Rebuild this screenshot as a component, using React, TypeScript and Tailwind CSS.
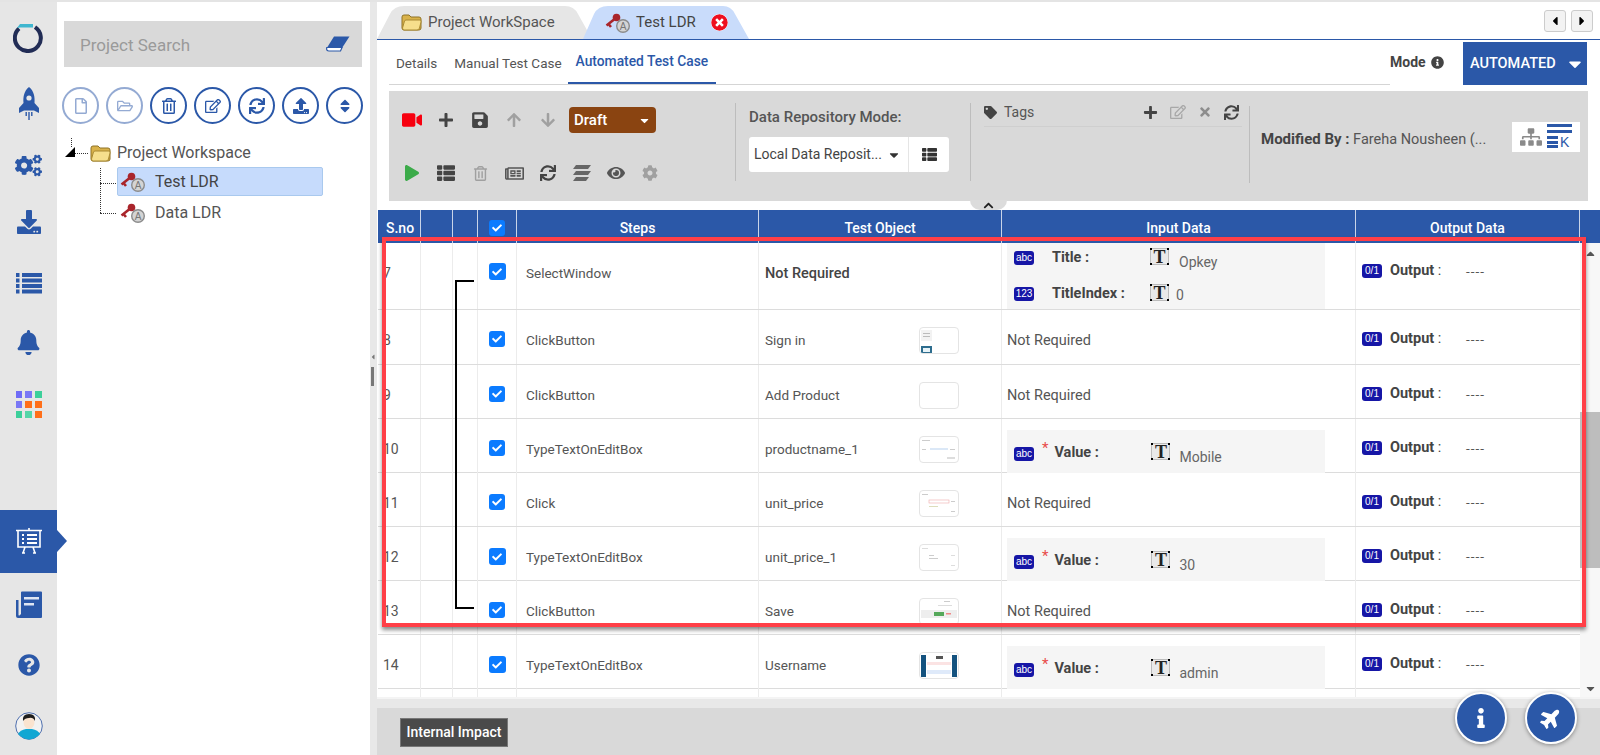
import React from "react";
import {
  FaArrowDown,
  FaArrowUp,
  FaBell,
  FaCaretDown,
  FaCaretLeft,
  FaCaretRight,
  FaCaretUp,
  FaCheck,
  FaChevronUp,
  FaCog,
  FaCogs,
  FaDownload,
  FaEye,
  FaInfo,
  FaInfoCircle,
  FaPlane,
  FaPlay,
  FaPlus,
  FaQuestionCircle,
  FaRegEdit,
  FaRegFile,
  FaRegFolderOpen,
  FaRegNewspaper,
  FaRegTrashAlt,
  FaSave,
  FaSitemap,
  FaSort,
  FaSync,
  FaTag,
  FaThList,
  FaTimes,
  FaTimesCircle,
  FaUpload,
  FaVideo,
} from "react-icons/fa";

const Folder = () => (
  <svg width="21" height="17" viewBox="0 0 21 17">
    <path d="M1 3 Q1 1 3 1 H8 L10 3 H18 Q20 3 20 5 V14 Q20 16 18 16 H3 Q1 16 1 14 Z" fill="#d9b24a" stroke="#8f7326" />
    <path d="M1.5 14 L3.5 7 Q4 6 5 6 H19 Q20.5 6 20 8 L18.5 14 Q18 16 16 16 H3 Q1.5 16 1.5 14 Z" fill="#f6df8c" stroke="#a98a32" />
  </svg>
);

const KeyIcon = () => (
  <svg width="26" height="20" viewBox="0 0 26 20">
    <path d="M1.5 12.5 L9 6.5 M3.5 11 L6 14" stroke="#a9252b" strokeWidth="2.6" fill="none" />
    <circle cx="11.5" cy="4.5" r="3.8" fill="#a9252b" />
    <circle cx="18" cy="13" r="6.3" fill="#d4d4d4" stroke="#8b8b8b" strokeWidth="1.4" />
    <text x="18" y="16.5" textAnchor="middle" fontSize="10" fill="#777" fontFamily="Liberation Sans, sans-serif">
      A
    </text>
  </svg>
);

const Logo = () => (
  <svg width="31" height="30" viewBox="0 0 31 30">
    <path d="M22 4.2 A13 13 0 1 1 6 5.5" fill="none" stroke="#212c55" strokeWidth="4" />
    <path d="M4 5 L7 1 H20 V4.5 H7 Z" fill="#3fb6cf" />
  </svg>
);

const Rocket = () => (
  <svg width="22" height="33" viewBox="0 0 22 33" fill="#2b58a8">
    <path d="M11 0 C16 4 17 10 16.5 16 L21 21 V26 L16 23.5 H6 L1 26 V21 L5.5 16 C5 10 6 4 11 0 Z" />
    <circle cx="11" cy="11" r="2.6" fill="#e6e6e6" />
    <rect x="7.5" y="25" width="1.4" height="4" />
    <rect x="10.3" y="25" width="1.4" height="8" />
    <rect x="13.1" y="25" width="1.4" height="4" />
  </svg>
);

const RailList = () => (
  <svg width="26" height="21" viewBox="0 0 26 21" fill="#2b58a8">
    {[0, 5.5, 11, 16.5].map((y) => (
      <g key={y}>
        <rect x="0" y={y} width="3.5" height="4" />
        <rect x="6" y={y} width="20" height="4" />
      </g>
    ))}
  </svg>
);

const Eraser = () => (
  <svg width="24" height="16" viewBox="0 0 24 16">
    <path d="M8 0.5 H23.5 L16 12 H0.8 Z" fill="#2b58a8" />
    <path d="M0.8 11.5 H16 L14.5 15 H3 Q0 15 0.8 11.5 Z" fill="#fff" stroke="#2b58a8" strokeWidth="1.2" />
  </svg>
);

const Layers = () => (
  <svg width="18" height="18" viewBox="0 0 18 18" fill="#666">
    <path d="M3 1 H18 L15 5 H0 Z" />
    <path d="M3 7 H18 L15 11 H0 Z" />
    <path d="M3 13 H16 L13 17 H0 Z" />
  </svg>
);

const BoardIcon = () => (
  <svg width="28" height="28" viewBox="0 0 28 28" fill="none" stroke="#fff" strokeWidth="1.6">
    <path d="M1 3.5 H27 M3 3.5 V20 H25 V3.5 M14 1 V3.5 M10 20 L8 26 M18 20 L20 26 M7 26 H10 M18 26 H21" />
    <path d="M12 8 H22 M12 12 H22 M12 16 H22" strokeWidth="1.8" />
    <path d="M7 8 H9 M7 12 H9 M7 16 H9" strokeWidth="2.2" />
  </svg>
);

const BookIcon = () => (
  <svg width="28" height="28" viewBox="0 0 28 28">
    <path d="M6 1.5 Q6 0.5 7 0.5 H26 Q27 0.5 27 1.5 V26 Q27 27 26 27 H3 Q1 27 1 25 V9 H3.5 V24 Q4 25 5 24 L6 23 Z" fill="#2b58a8" />
    <rect x="9" y="6" width="15" height="2.5" fill="#dfe6f3" />
    <rect x="9" y="12" width="10" height="2.5" fill="#dfe6f3" />
  </svg>
);

const Avatar = () => (
  <svg width="28" height="28" viewBox="0 0 28 28">
    <circle cx="14" cy="14" r="13.3" fill="#f2f2f2" stroke="#4e6fae" />
    <path d="M3 22 Q5 18 11 17 H17 Q23 18 25 22 Q20 27.4 14 27.4 Q8 27.4 3 22 Z" fill="#12a7d3" />
    <ellipse cx="14" cy="10" rx="5.5" ry="7" fill="#fae3cf" />
    <path d="M8 9 Q7 2 14 2 Q21 2 20 9 Q18 5 14 6 Q10 6 8 9 Z" fill="#1d1d1d" />
  </svg>
);

const AppGrid = () => {
  const colors = [
    "bg-[#6f6cf6]",
    "bg-[#7a78f5]",
    "bg-[#3ccf9a]",
    "bg-[#7a78f5]",
    "bg-[#ff6f1a]",
    "bg-[#ff6f1a]",
    "bg-[#3ccf9a]",
    "bg-[#55d5a8]",
    "bg-[#ff6f1a]",
  ];
  return (
    <div className="grid grid-cols-3 gap-[3.5px] w-[26px]">
      {colors.map((c, i) => (
        <div key={i} className={`h-[6.5px] ${c}`} />
      ))}
    </div>
  );
};

const Thumb = ({ kind }: { kind: number }) => (
  <div className="w-[40px] h-[27px] bg-white rounded-[4px] border border-[#e4e4e4] overflow-hidden">
    <svg width="38" height="25" viewBox="0 0 38 25">
      {kind === 1 && (
        <>
          <rect x="1" y="2" width="11" height="11" fill="#f2f2f2" />
          <rect x="3" y="5" width="7" height="1" fill="#bbb" />
          <rect x="3" y="8" width="7" height="1" fill="#bbb" />
          <rect x="1" y="18" width="11" height="7" fill="#2d6d8e" />
          <rect x="3" y="20" width="7" height="4" fill="#e7f3f8" />
        </>
      )}
      {kind === 2 && (
        <>
          <rect x="2" y="3" width="8" height="1" fill="#ccc" />
          <rect x="10" y="11" width="18" height="2" fill="#dbe8f7" />
          <rect x="2" y="12" width="4" height="1" fill="#ccc" />
          <rect x="30" y="12" width="5" height="1" fill="#ccc" />
          <rect x="27" y="20" width="8" height="2" fill="#ddd" />
        </>
      )}
      {kind === 3 && (
        <>
          <rect x="2" y="3" width="6" height="1" fill="#ccc" />
          <rect x="9" y="9" width="20" height="3" fill="#fff" stroke="#eaa" strokeWidth="0.6" />
          <rect x="9" y="15" width="9" height="1" fill="#ddb" />
          <rect x="31" y="10" width="4" height="1" fill="#ccc" />
          <rect x="31" y="20" width="4" height="1" fill="#ccc" />
        </>
      )}
      {kind === 4 && (
        <>
          <rect x="2" y="3" width="6" height="1" fill="#ddd" />
          <rect x="9" y="10" width="5" height="1" fill="#ccc" />
          <rect x="9" y="13" width="9" height="1" fill="#ccc" />
          <rect x="31" y="10" width="4" height="1" fill="#ddd" />
          <rect x="31" y="20" width="4" height="1" fill="#ddd" />
        </>
      )}
      {kind === 5 && (
        <>
          <rect x="24" y="2" width="6" height="1" fill="#ccc" />
          <rect x="18" y="6" width="14" height="1" fill="#ddd" />
          <rect x="1" y="11" width="36" height="8" fill="#eeeeee" />
          <rect x="14" y="13" width="10" height="4" fill="#55a85a" />
          <rect x="26" y="14" width="5" height="1.5" fill="#e88" />
        </>
      )}
      {kind === 6 && (
        <>
          <rect x="1" y="2" width="5" height="22" fill="#14527f" />
          <rect x="32" y="2" width="5" height="22" fill="#14527f" />
          <rect x="16" y="3" width="7" height="3" fill="#555" />
          <rect x="7" y="9" width="24" height="3" fill="#fbe3e3" />
          <rect x="7" y="17" width="24" height="4" fill="#dfeafa" />
        </>
      )}
    </svg>
  </div>
);

const Check = ({ big }: { big?: boolean }) => (
  <div
    className={`flex items-center justify-center bg-[#0b7bff] rounded-[3px] text-white ${
      big ? "w-[17px] h-[17px]" : "w-[16px] h-[16px]"
    }`}
  >
    <FaCheck size={10} />
  </div>
);

const Badge = ({ text }: { text: string }) => (
  <span className="flex items-center justify-center w-[20px] h-[14px] rounded-[3px] bg-[#1616a6] text-white text-[10px] leading-none shrink-0 font-['Liberation_Sans',sans-serif]">
    {text}
  </span>
);

const TIcon = () => (
  <span className="relative flex items-center justify-center w-[19px] h-[17px] bg-[#e9e9e9] border border-[#bbb] shrink-0">
    <span className="font-['Liberation_Serif',serif] font-bold text-[18px] leading-none text-[#222]">T</span>
    <span className="absolute -left-[1px] -top-[1px] w-[2px] h-[2px] bg-black" />
    <span className="absolute -right-[1px] -top-[1px] w-[2px] h-[2px] bg-black" />
    <span className="absolute -left-[1px] -bottom-[1px] w-[2px] h-[2px] bg-black" />
    <span className="absolute -right-[1px] -bottom-[1px] w-[2px] h-[2px] bg-black" />
  </span>
);

const ValueBox = ({ value }: { value: string }) => (
  <div className="mt-[11px] w-[318px] h-[43px] bg-[#f5f5f5] flex items-start pl-[7px]">
    <div className="mt-[17px]">
      <Badge text="abc" />
    </div>
    <span className="ml-[8px] mt-[8px] text-[#e84a4a] text-[15px] leading-[20px]">*</span>
    <span className="ml-[6px] mt-[13px] font-bold text-[14.5px] leading-[20px] text-[#444] w-[97px]">Value :</span>
    <div className="mt-[13px]">
      <TIcon />
    </div>
    <span className="ml-[9px] mt-[17px] text-[14px] leading-[20px] text-[#666]">{value}</span>
  </div>
);

const TitleBox = () => (
  <div className="w-[318px] h-[66px] bg-[#f5f5f5] pl-[7px]">
    <div className="flex items-start h-[36px] pt-[5px]">
      <div className="mt-[3px]">
        <Badge text="abc" />
      </div>
      <span className="ml-[18px] font-bold text-[14.5px] leading-[20px] text-[#444] w-[98px]">Title :</span>
      <TIcon />
      <span className="ml-[10px] mt-[4px] text-[14px] leading-[20px] text-[#666]">Opkey</span>
    </div>
    <div className="flex items-start pt-[5px]">
      <div className="mt-[3px]">
        <Badge text="123" />
      </div>
      <span className="ml-[18px] font-bold text-[14.5px] leading-[20px] text-[#444] w-[98px]">TitleIndex :</span>
      <TIcon />
      <span className="ml-[7px] mt-[1px] text-[14px] leading-[20px] text-[#666]">0</span>
    </div>
  </div>
);

const NotRequired = () => <div className="pt-[21px] text-[14.5px] leading-[20px] text-[#555]">Not Required</div>;

type Row = {
  no: string;
  step: string;
  object: string;
  thumb: number;
  h: string;
  input: React.ReactNode;
};

const rows: Row[] = [
  { no: "7", step: "SelectWindow", object: "Not Required", thumb: -1, h: "h-[67px]", input: <TitleBox /> },
  { no: "8", step: "ClickButton", object: "Sign in", thumb: 1, h: "h-[55px]", input: <NotRequired /> },
  { no: "9", step: "ClickButton", object: "Add Product", thumb: 0, h: "h-[54px]", input: <NotRequired /> },
  { no: "10", step: "TypeTextOnEditBox", object: "productname_1", thumb: 2, h: "h-[54px]", input: <ValueBox value="Mobile" /> },
  { no: "11", step: "Click", object: "unit_price", thumb: 3, h: "h-[54px]", input: <NotRequired /> },
  { no: "12", step: "TypeTextOnEditBox", object: "unit_price_1", thumb: 4, h: "h-[54px]", input: <ValueBox value="30" /> },
  { no: "13", step: "ClickButton", object: "Save", thumb: 5, h: "h-[54px]", input: <NotRequired /> },
  { no: "14", step: "TypeTextOnEditBox", object: "Username", thumb: 6, h: "h-[54px]", input: <ValueBox value="admin" /> },
];

const cols = "grid grid-cols-[43px_32px_25px_39px_242px_243px_354px_224px]";

const ToolIcon = ({ children, className }: { children: React.ReactNode; className: string }) => (
  <span className={`w-[34px] flex justify-center ${className}`}>{children}</span>
);

const App = () => {
  return (
    <div className="w-[1600px] h-[755px] overflow-hidden bg-white font-['Roboto',sans-serif] text-[#444]">
      <div className="h-[2px] bg-[#e4e4e4]" />
      <div className="flex h-[753px]">
        {/* left rail */}
        <div className="w-[57px] shrink-0 bg-[#e6e6e6] flex flex-col items-center pt-[21px] text-[#2b58a8]">
          <Logo />
          <div className="mt-[34px]"><Rocket /></div>
          <div className="mt-[32px]"><FaCogs size={27} /></div>
          <div className="mt-[31px]"><FaDownload size={24} /></div>
          <div className="mt-[39px]"><RailList /></div>
          <div className="mt-[36px]"><FaBell size={25} /></div>
          <div className="mt-[36px]"><AppGrid /></div>
          <div className="relative mt-[92px] w-[57px] h-[63px] bg-[#2b58a8] flex items-center justify-center">
            <BoardIcon />
            <div className="absolute left-[57px] top-[20px] w-0 h-0 border-y-[11px] border-y-transparent border-l-[10px] border-l-[#2b58a8]" />
          </div>
          <div className="mt-[18px]"><BookIcon /></div>
          <div className="mt-[35px]"><FaQuestionCircle size={22} /></div>
          <div className="mt-[36px]"><Avatar /></div>
        </div>

        {/* project tree */}
        <div className="w-[313px] shrink-0 pl-[7px] pt-[19px]">
          <div className="w-[298px] h-[46px] bg-[#d9d9d9] flex items-center justify-between pl-[16px] pr-[12px]">
            <span className="text-[17px] pt-[4px] text-[#9a9a9a]">Project Search</span>
            <Eraser />
          </div>
          <div className="flex mt-[20px] -ml-[2px] w-[301px] justify-between text-[#2b58a8]">
            {[FaRegFile, FaRegFolderOpen, FaRegTrashAlt, FaRegEdit, FaSync, FaUpload, FaSort].map((Icon, i) => (
              <div
                key={i}
                className={`w-[37px] h-[37px] rounded-full border-[2px] border-[#2b58a8] flex items-center justify-center ${
                  i < 2 ? "opacity-50" : ""
                }`}
              >
                <Icon size={16} />
              </div>
            ))}
          </div>
          <div className="relative mt-[14px] h-[100px]">
            <div className="absolute left-[7px] top-[0px] h-[9px] border-l border-dotted border-[#333]" />
            <div className="absolute left-[1px] top-[9px] w-0 h-0 border-b-[10px] border-b-black border-l-[10px] border-l-transparent" />
            <div className="absolute left-[11px] top-[15px] w-[13px] border-t border-dotted border-[#333]" />
            <div className="absolute left-[36px] top-[30px] h-[45px] border-l border-dotted border-[#333]" />
            <div className="absolute left-[36px] top-[45px] w-[16px] border-t border-dotted border-[#333]" />
            <div className="absolute left-[36px] top-[75px] w-[16px] border-t border-dotted border-[#333]" />
            <div className="flex items-center pl-[26px] h-[30px]">
              <Folder />
              <span className="ml-[6px] text-[16px] text-[#555]">Project Workspace</span>
            </div>
            <div className="flex items-center ml-[53px] -mt-[1px] w-[206px] h-[29px] bg-[#c6dbfc] border border-[#a9c9ee] rounded-[2px] pl-[2px]">
              <KeyIcon />
              <span className="ml-[9px] text-[16px] text-[#444]">Test LDR</span>
            </div>
            <div className="flex items-center ml-[53px] mt-[2px] h-[29px] pl-[3px]">
              <KeyIcon />
              <span className="ml-[9px] text-[16px] text-[#555]">Data LDR</span>
            </div>
          </div>
        </div>

        {/* splitter */}
        <div className="relative w-[7px] shrink-0 bg-[#e8e8e8]">
          <FaCaretLeft size={8} className="absolute left-[-1px] top-[351px] text-[#777]" />
          <div className="absolute left-[1px] top-[365px] w-[3px] h-[19px] bg-[#777]" />
        </div>

        {/* main panel */}
        <div className="relative w-[1223px] shrink-0 flex flex-col">
          <div className="relative h-[38px] border-b border-[#2b58a8] flex items-end pt-[3px]">
            <div className="relative w-[215px] h-[33px] bg-[#e6e6e6] [clip-path:path('M0,33_L13,8_Q17,0,27,0_L188,0_Q197,0,201,8_L215,33_Z')] flex items-center pl-[24px]">
              <Folder />
              <span className="ml-[6px] text-[15px] text-[#555]">Project WorkSpace</span>
            </div>
            <div className="relative -ml-[9px] w-[166px] h-[33px] bg-[#c9dcfb] [clip-path:path('M0,33_L11,8_Q15,0,25,0_L140,0_Q148,0,152,8_L166,33_Z')] flex items-center pl-[22px]">
              <KeyIcon />
              <span className="ml-[5px] text-[15px] text-[#444]">Test LDR</span>
              <FaTimesCircle size={17} className="ml-[15px] text-[#ee0f1f] bg-white rounded-full" />
            </div>
            <div className="absolute right-[7px] top-[8px] flex gap-[5px]">
              <div className="w-[22px] h-[22px] bg-[#f3f3f3] border border-[#ccc] rounded-[3px] flex items-center justify-center text-black">
                <FaCaretLeft size={14} />
              </div>
              <div className="w-[22px] h-[22px] bg-[#f3f3f3] border border-[#ccc] rounded-[3px] flex items-center justify-center text-black">
                <FaCaretRight size={14} />
              </div>
            </div>
          </div>

          <div className="h-[51px] flex items-start pl-[12px] pr-[12px]">
            <div className="w-[1001px] h-[45px] border-b border-[#d5d5d5] flex items-stretch text-[13.5px] text-[#555]">
              <span className="ml-[7px] pt-[13px]">Details</span>
              <span className="ml-[17px] pt-[13px]">Manual Test Case</span>
              <span className="ml-[6px] h-[44px] px-[8px] pt-[11px] border-b-2 border-[#2b58a8] text-[#2b58a8] text-[13.8px] font-medium">
                Automated Test Case
              </span>
            </div>
            <div className="w-[73px] pt-[12px] flex items-center gap-[5px] text-[14px] font-bold text-[#444]">
              Mode <FaInfoCircle size={13} />
            </div>
            <div className="mt-[2px] w-[124px] h-[43px] bg-[#2b58a8] text-white font-medium text-[14.5px] flex items-center pl-[7px]">
              AUTOMATED
              <FaCaretDown size={20} className="ml-[9px]" />
            </div>
          </div>

          <div className="ml-[12px] w-[1199px] h-[110px] bg-[#d9d9d9] flex">
            <div className="w-[346px] pl-[6px] pt-[16px] flex flex-col">
              <div className="flex items-center h-[26px]">
                <ToolIcon className="text-[#f7000f]"><FaVideo size={20} /></ToolIcon>
                <ToolIcon className="text-[#444]"><FaPlus size={16} /></ToolIcon>
                <ToolIcon className="text-[#444]"><FaSave size={18} /></ToolIcon>
                <ToolIcon className="text-[#a0a0a0]"><FaArrowUp size={16} /></ToolIcon>
                <ToolIcon className="text-[#a0a0a0]"><FaArrowDown size={16} /></ToolIcon>
                <div className="ml-[4px] w-[87px] h-[26px] rounded-[4px] bg-[#8a4411] text-white font-medium text-[15px] flex items-center justify-between pl-[5px] pr-[5px]">
                  Draft
                  <FaCaretDown size={13} />
                </div>
              </div>
              <div className="flex items-center mt-[30px] h-[20px]">
                <ToolIcon className="text-[#3cab4a]"><FaPlay size={16} /></ToolIcon>
                <ToolIcon className="text-[#444]"><FaThList size={18} /></ToolIcon>
                <ToolIcon className="text-[#a0a0a0]"><FaRegTrashAlt size={15} /></ToolIcon>
                <ToolIcon className="text-[#555]"><FaRegNewspaper size={19} /></ToolIcon>
                <ToolIcon className="text-[#444]"><FaSync size={16} /></ToolIcon>
                <ToolIcon className="text-[#666]"><Layers /></ToolIcon>
                <ToolIcon className="text-[#555]"><FaEye size={18} /></ToolIcon>
                <ToolIcon className="text-[#a0a0a0]"><FaCog size={16} /></ToolIcon>
              </div>
            </div>
            <div className="mt-[12px] h-[78px] w-[1px] bg-[#bdbdbd]" />
            <div className="w-[234px] pl-[13px] pt-[16px]">
              <div className="text-[15px] leading-[20px] font-medium text-[#555]">Data Repository Mode:</div>
              <div className="mt-[10px] flex w-[200px] h-[35px] bg-white rounded-[3px]">
                <div className="w-[160px] flex items-center justify-between pl-[5px] pr-[7px] border-r border-[#e5e5e5] text-[14px] text-[#444] whitespace-nowrap">
                  Local Data Reposit...
                  <FaCaretDown size={14} className="text-[#333]" />
                </div>
                <div className="flex-1 flex items-center justify-center text-[#333]">
                  <FaThList size={15} />
                </div>
              </div>
            </div>
            <div className="mt-[12px] h-[78px] w-[1px] bg-[#bdbdbd]" />
            <div className="w-[278px] pl-[13px] pr-[7px] pt-[9px]">
              <div className="flex items-center h-[27px] pb-[2px] border-b border-[#cfcfcf] text-[14px] text-[#555]">
                <FaTag size={13} className="text-[#444]" />
                <span className="ml-[7px]">Tags</span>
                <div className="ml-auto mr-[3px] flex items-center gap-[12px] text-[#444]">
                  <FaPlus size={15} />
                  <FaRegEdit size={16} className="text-[#a8a8a8]" />
                  <FaTimes size={14} className="text-[#8d8d8d]" />
                  <FaSync size={15} />
                </div>
              </div>
            </div>
            <div className="mt-[15px] h-[77px] w-[1px] bg-[#bdbdbd]" />
            <div className="flex-1 flex items-start pl-[11px] pt-[31px]">
              <div className="text-[14.5px] w-[251px] leading-[20px] text-[#555] whitespace-nowrap pt-[7px]">
                <span className="font-bold text-[15px] text-[#444]">Modified By :</span> Fareha Nousheen (...
              </div>
              <div className="w-[68px] h-[30px] bg-white flex items-center justify-between px-[8px] text-[#8a8a8a]">
                <FaSitemap size={22} />
                <svg width="25" height="28" viewBox="0 0 25 28">
                  <rect x="0" y="1" width="25" height="3" fill="#2b58a8" />
                  <rect x="0" y="7" width="25" height="3" fill="#2b58a8" />
                  <rect x="0" y="13" width="11" height="3" fill="#2b58a8" />
                  <rect x="0" y="18" width="11" height="3" fill="#2b58a8" />
                  <rect x="0" y="22" width="11" height="3" fill="#2b58a8" />
                  <text x="13" y="24" fontSize="14" fill="#2b58a8" fontFamily="Liberation Sans, sans-serif">
                    K
                  </text>
                </svg>
              </div>
            </div>
          </div>

          <div className="h-[9px]" />

          {/* steps grid */}
          <div className="relative h-[487px] overflow-hidden pl-[1px]">
            <div className={`${cols} h-[33px] bg-[#2b58a8] text-white font-medium text-[14px] w-[1222px]`}>
              {["S.no", "", "", "", "Steps", "Test Object", "Input Data", "Output Data"].map((h, i) => (
                <div
                  key={i}
                  className={`border-r border-[#c9d4e8] flex items-center pt-[3px] ${
                    i === 0 ? "pl-[8px]" : "justify-center"
                  }`}
                >
                  {i === 3 ? <Check /> : h}
                </div>
              ))}
            </div>

            {rows.map((r, i) => {
              return (
                <div key={r.no} className={`${cols} ${r.h} border-b border-[#dcdcdc] text-[13.5px] leading-[20px] text-[#555]`}>
                  <div className="border-r border-[#ececec] pl-[5px] pt-[20px] text-[14px]">{r.no}</div>
                  <div className="border-r border-[#ececec]" />
                  <div className="border-r border-[#ececec]" />
                  <div className="border-r border-[#ececec] flex justify-center pt-[20px]">
                    <div className={i === 0 ? "" : "pt-[1px]"}>
                      <Check big={i === 0 || r.no === "12" || r.no === "14"} />
                    </div>
                  </div>
                  <div className="border-r border-[#ececec] pl-[9px] pt-[20px]">{r.step}</div>
                  <div className="relative border-r border-[#ececec] pl-[6px] pt-[20px]">
                    {r.thumb < 0 ? <span className="font-medium text-[14.5px] text-[#444]">{r.object}</span> : r.object}
                    {r.thumb >= 0 && (
                      <div className="absolute left-[160px] top-[17px]">
                        <Thumb kind={r.thumb} />
                      </div>
                    )}
                  </div>
                  <div className="border-r border-[#ececec] pl-[5px]">{r.input}</div>
                  <div className={`flex items-start pl-[6px] ${i === 0 ? "pt-[18px]" : "pt-[19px]"}`}>
                    <div className="pt-[3px]">
                      <Badge text="0/1" />
                    </div>
                    <span className="ml-[8px] font-bold text-[14.5px] text-[#444] w-[76px]">
                      Output <span className="font-normal">:</span>
                    </span>
                    <span className="tracking-[1px]">----</span>
                  </div>
                </div>
              );
            })}
            <div className={`${cols} h-[8px]`}>
              {[0, 1, 2, 3, 4, 5, 6].map((c) => (
                <div key={c} className="border-r border-[#ececec]" />
              ))}
            </div>

            {/* scrollbar */}
            <div className="absolute left-[1203px] top-[33px] bottom-0 w-[20px] bg-[#f7f7f7] flex flex-col items-center">
              <FaCaretUp size={13} className="mt-[4px] text-[#555]" />
              <div className="mt-[152px] w-full h-[156px] bg-[#bdbdbd]" />
              <FaCaretDown size={13} className="mt-auto mb-[2px] text-[#555]" />
            </div>

            <div className="absolute left-[78px] top-[70px] w-[19px] h-[329px] border-l-2 border-y-2 border-black" />
            <div className="absolute left-[5px] top-[27px] w-[1204px] h-[390px] border-4 border-[#ff3f47] shadow-[0_3px_4px_rgba(0,0,0,0.45)]" />
          </div>

          <div className="h-[11px] border-t-2 border-[#f4f4f4] bg-[#e8e8e8]" />
          <div className="h-[47px] bg-[#d9d9d9] pl-[23px] pt-[10px]">
            <div className="w-[108px] h-[29px] bg-[#4a4a4a] border border-[#777] text-white text-[14px] font-medium flex items-center justify-center">
              Internal Impact
            </div>
          </div>

          <div className="absolute left-[1078px] top-[690px] flex gap-[18px]">
            <div className="w-[52px] h-[52px] rounded-full bg-[#2b58a8] border-[2px] border-white shadow-[0_1px_4px_rgba(0,0,0,0.4)] flex items-center justify-center text-white">
              <FaInfo size={20} />
            </div>
            <div className="w-[52px] h-[52px] rounded-full bg-[#2b58a8] border-[2px] border-white shadow-[0_1px_4px_rgba(0,0,0,0.4)] flex items-center justify-center text-white">
              <FaPlane size={22} className="-rotate-45" />
            </div>
          </div>

          {/* collapse handle */}
          <div className="absolute left-[593px] top-[198px] w-[37px] h-[10px] bg-[#dcdcdc] rounded-b-[14px] flex justify-center text-[#222]">
            <FaChevronUp size={11} />
          </div>
        </div>
      </div>
    </div>
  );
};

export default App;
